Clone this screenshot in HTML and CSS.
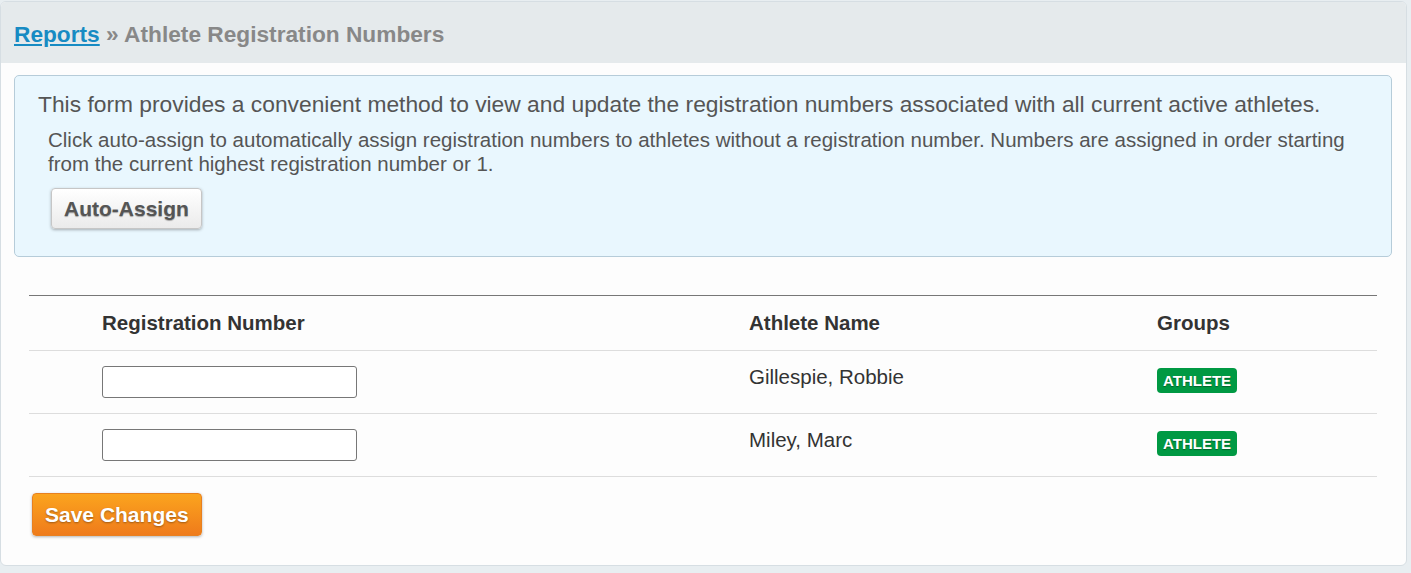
FILE: index.html
```html
<html lang="en">
<head>
    <meta charset="UTF-8">
    <title>Athlete Registration Numbers</title>
    <link rel="stylesheet" href="styles.css">
</head>
<body>
<div class="panel">
    <div class="panel-header">
        <a href="javascript:;" class="crumb">Reports</a> &raquo; Athlete Registration Numbers
    </div>
    <div class="panel-body">
        <div class="info-box">
            <p class="lead">This form provides a convenient method to view and update the registration numbers associated with all current active athletes.</p>
            <p class="note">Click auto-assign to automatically assign registration numbers to athletes without a registration number. Numbers are assigned in order starting from the current highest registration number or 1.</p>
            <button type="button" class="btn btn-light">Auto-Assign</button>
        </div>
        <form action="">
            <table class="reg-table">
                <thead>
                <tr>
                    <th class="col-sel"></th>
                    <th class="col-num">Registration Number</th>
                    <th class="col-name">Athlete Name</th>
                    <th class="col-groups">Groups</th>
                </tr>
                </thead>
                <tbody>
                <tr>
                    <td></td>
                    <td><input type="text" class="reg-input" name="reg1" value=""/></td>
                    <td>Gillespie, Robbie</td>
                    <td><span class="badge">ATHLETE</span></td>
                </tr>
                <tr>
                    <td></td>
                    <td><input type="text" class="reg-input" name="reg2" value=""/></td>
                    <td>Miley, Marc</td>
                    <td><span class="badge">ATHLETE</span></td>
                </tr>
                </tbody>
            </table>
            <div class="actions">
                <button type="submit" class="btn btn-orange">Save Changes</button>
            </div>
        </form>
    </div>
</div>
</body>
</html>
```

FILE: styles.css
```css
*{
    padding:0px;
    margin:0px;
    box-sizing:border-box;
}
body{
    font-family:"Liberation Sans",Arial,sans-serif;
    background:#e8eef1;
    padding-top:1px;
}
.panel{
    width:1407px;
    border:1px solid #d6dee3;
    border-radius:6px;
    background:#fdfdfd;
    overflow:hidden;
}
.panel-header{
    background:#e5eaec;
    padding:21px 13px 18px;
    font-size:22.7px;
    line-height:22px;
    font-weight:bold;
    color:#888;
}
.panel-header .crumb{
    color:#178bc3;
    text-decoration:underline;
}
.panel-body{
    padding:12px 14px 29px 13px;
}
.info-box{
    background:#e9f7fe;
    border:1px solid #b6ccd9;
    border-radius:5px;
    padding:17px 20px 27px 23px;
}
.info-box .lead{
    font-size:22.8px;
    line-height:22px;
    color:#555;
}
.info-box .note{
    font-size:20.5px;
    line-height:24px;
    color:#555;
    margin:13px 0px 12px 10px;
}
.btn{
    font-family:"Liberation Sans",Arial,sans-serif;
    font-size:21px;
    line-height:22px;
    font-weight:bold;
    border-radius:4px;
    cursor:pointer;
}
.btn-light{
    margin-left:13px;
    padding:9px 12px 8px;
    color:#555;
    background:linear-gradient(#ffffff,#ebebeb);
    border:1px solid #c6c6c6;
    box-shadow:0 1px 3px rgba(0,0,0,0.3);
    text-shadow:0 1px 1px rgba(0,0,0,0.3);
}
.reg-table{
    width:1348px;
    margin:38px 0px 0px 15px;
    border-collapse:collapse;
    border-top:1px solid #777;
    color:#333;
    font-size:20.5px;
    line-height:22px;
}
.reg-table th{
    text-align:left;
    padding:16px 8px;
    border-bottom:1px solid #ddd;
}
.reg-table td{
    vertical-align:top;
    padding:15px 8px;
    border-bottom:1px solid #ddd;
}
.reg-table .col-sel{
    width:65px;
}
.reg-table .col-num{
    width:647px;
}
.reg-table .col-name{
    width:408px;
}
.reg-table .reg-input{
    display:block;
    width:255px;
    height:32px;
    border:1px solid #777;
    border-radius:3px;
    background:#fff;
    font-size:16px;
    padding:0px 6px;
}
.badge{
    display:inline-block;
    vertical-align:top;
    margin-top:2px;
    padding:0px 6px;
    height:25px;
    line-height:25px;
    font-size:15px;
    font-weight:bold;
    color:#fff;
    background:#009943;
    border-radius:4px;
    text-shadow:0 1px 1px rgba(0,0,0,0.35);
}
.actions{
    padding:16px 0px 0px 18px;
}
.btn-orange{
    padding:10px 12px 9px;
    color:#fff;
    background:linear-gradient(#fba41e,#ef7b1b);
    border:1px solid #e8801f;
    box-shadow:0 1px 3px rgba(0,0,0,0.3);
    text-shadow:0 1px 2px rgba(0,0,0,0.35);
}
```
